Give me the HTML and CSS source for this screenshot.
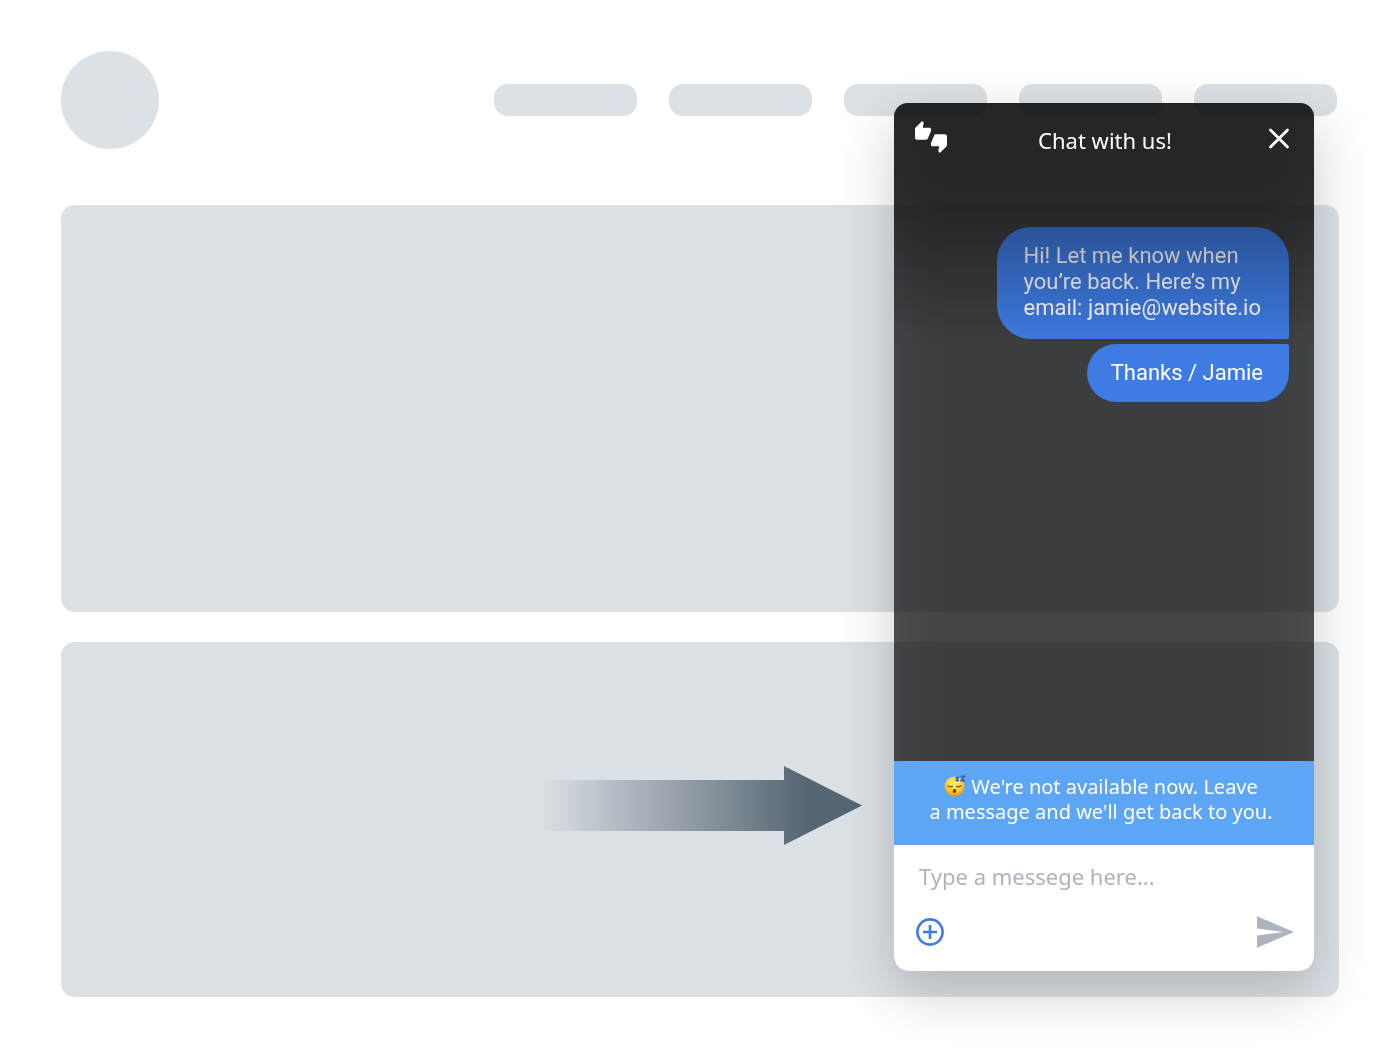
FILE: index.html
```html
<!DOCTYPE html>
<html lang="en">
<head>
  <meta charset="UTF-8" />
  <meta name="viewport" content="width=device-width, initial-scale=1.0"/>
  <title>Chat with us!</title>
  <link rel="stylesheet" href="styles.css">
</head>
<body>
  <!-- Placeholder page behind the widget -->
  <div class="page">
    <header class="page-header">
      <div class="logo"></div>
      <div class="nav">
        <div class="nav-item"></div>
        <div class="nav-item"></div>
        <div class="nav-item"></div>
        <div class="nav-item"></div>
        <div class="nav-item"></div>
      </div>
    </header>

    <div class="block block-large"></div>
    <div class="block block-arrow">
      <svg class="arrow" viewBox="0 0 324 79" aria-hidden="true">
        <defs>
          <linearGradient id="arrowFade" gradientUnits="userSpaceOnUse" x1="0" y1="0" x2="268" y2="0">
            <stop offset="0" stop-color="#566673" stop-opacity="0"/>
            <stop offset="1" stop-color="#566673"/>
          </linearGradient>
        </defs>
        <path fill="url(#arrowFade)" d="M0 14H246V0L324 39.500L246 79V65H0z"/>
      </svg>
    </div>
  </div>

  <!-- Chat widget -->
  <div class="chat">
    <div class="chat-window">
      <div class="chat-header">
        <button class="icon-btn" aria-label="Rate chat">
          <svg width="32" height="32" viewBox="0 0 24 24" fill="#fff">
            <path d="M12 6c0-.55-.45-1-1-1H5.820l.66-3.180.02-.23c0-.31-.13-.59-.33-.8L5.380 0 .44 4.940C.17 5.210 0 5.590 0 6v6.500c0 .83.67 1.500 1.500 1.500h6.750c.62 0 1.150-.38 1.380-.91l2.260-5.290c.07-.17.11-.36.11-.55V6zm10.500 4h-6.750c-.62 0-1.150.38-1.380.91l-2.260 5.290c-.07.17-.11.36-.11.55V18c0 .55.45 1 1 1h5.180l-.66 3.180-.02.24c0 .31.13.59.33.8l.79.78 4.940-4.940c.27-.27.44-.65.44-1.060v-6.500c0-.83-.67-1.500-1.500-1.500z"/>
          </svg>
        </button>
        <h1>Chat with us!</h1>
        <button class="icon-btn" aria-label="Close">
          <svg width="32" height="32" viewBox="0 0 32 32" stroke="#fff" stroke-width="2.800" stroke-linecap="round">
            <path d="M7.500 9L24.500 26M24.500 9L7.500 26"/>
          </svg>
        </button>
      </div>

      <div class="messages">
        <div class="bubble bubble-first">Hi! Let me know when<br>you’re back. Here’s my<br>email: jamie@website.io</div>
        <div class="bubble bubble-last">Thanks / Jamie</div>
      </div>

      <div class="notice">
        <svg class="emoji" width="22" height="22" viewBox="0 0 22 22" aria-hidden="true">
          <defs>
            <radialGradient id="face" cx=".5" cy=".35" r=".65">
              <stop offset="0" stop-color="#fff176"/>
              <stop offset=".6" stop-color="#fdd035"/>
              <stop offset="1" stop-color="#e8920c"/>
            </radialGradient>
          </defs>
          <circle cx="10.500" cy="11.500" r="10" fill="url(#face)"/>
          <g fill="none" stroke="#6b3f0c" stroke-width="1.200" stroke-linecap="round">
            <path d="M4 10.800Q6.200 12.600 8.400 11.200M12.600 11.200Q14.800 12.600 17 10.800"/>
          </g>
          <ellipse cx="10.500" cy="16" rx="1.800" ry="2" fill="#6b3f0c"/>
          <g fill="none" stroke="#2f5fc4" stroke-width="1.500" stroke-linejoin="round">
            <path d="M11.500 2.500H14.500L12 5.500H15"/>
            <path d="M16.500 1.200H20.500L17 5.800H21"/>
          </g>
        </svg>
        We're not available now. Leave<br>a message and we'll get back to you.
      </div>

      <form class="composer">
        <input type="text" aria-label="Message" placeholder="Type a messege here...">
        <div class="composer-actions">
          <button class="icon-btn" type="button" aria-label="Add attachment">
            <svg width="28" height="28" viewBox="0 0 28 28" fill="none" stroke="#3e7be3">
              <circle cx="14" cy="14" r="12.600" stroke-width="2.600"/>
              <path d="M14 7V21M7 14H21" stroke-width="2.600"/>
            </svg>
          </button>
          <button class="icon-btn" type="submit" aria-label="Send">
            <svg width="37" height="32" viewBox="2 3 21 18" fill="#adb4bd">
              <path d="M2.010 21L23 12 2.010 3 2 10l15 2-15 2z"/>
            </svg>
          </button>
        </div>
      </form>
    </div>
  </div>
</body>
</html>
```
FILE: styles.css
```css
* { box-sizing: border-box; }

body {
  margin: 0;
  background: #fff;
  font-family: "Noto Sans", sans-serif;
}

/* Placeholder page */
.page {
  display: flex;
  flex-direction: column;
  gap: 30px;
  padding: 51px 61px 53px;
}

.page-header {
  display: flex;
  align-items: center;
  justify-content: space-between;
  margin-bottom: 26px;
  padding-right: 2px;
}

.logo {
  width: 98px;
  height: 98px;
  border-radius: 50%;
  background: #dce1e5;
}

.nav {
  display: flex;
  gap: 32px;
}

.nav-item {
  width: 143px;
  height: 32px;
  border-radius: 14px;
  background: #dce1e5;
}

.block {
  border-radius: 14px;
  background: #dce1e5;
}

.block-large {
  height: 407px;
}

.block-arrow {
  display: flex;
  justify-content: flex-end;
  height: 355px;
  padding: 124px 477px 0 0;
}

.arrow {
  width: 324px;
  height: 79px;
}

/* Chat widget */
.chat {
  position: fixed;
  right: 86px;
  bottom: 79px;
  width: 420px;
  height: 868px;
  isolation: isolate;
}

/* soft shadow that also shows through the translucent window */
.chat::before {
  content: "";
  position: absolute;
  inset: 20px 0 -20px;
  z-index: -1;
  border-radius: 14px;
  background: rgba(0, 0, 0, 0.2);
  filter: blur(28px);
}

.chat-window {
  display: flex;
  flex-direction: column;
  height: 100%;
  overflow: hidden;
  border-radius: 14px;
  background: rgba(10, 10, 10, 0.7);
}

/* dark fade over the header and the oldest messages */
.chat-window::before {
  content: "";
  position: absolute;
  inset: 0 0 auto;
  height: 245px;
  border-radius: 14px 14px 0 0;
  background: linear-gradient(rgba(0, 0, 0, 0.52), rgba(0, 0, 0, 0.42) 38%, rgba(0, 0, 0, 0));
}

.chat-header {
  position: relative;
  display: flex;
  align-items: center;
  justify-content: space-between;
  padding: 18px 19px 0 21px;
}

.chat-header h1 {
  margin: 6px 0 0;
  color: #fff;
  font-size: 22px;
  line-height: 26px;
  font-weight: 400;
}

.icon-btn {
  display: flex;
  padding: 0;
  border: none;
  background: none;
  cursor: pointer;
}

.messages {
  display: flex;
  flex: 1;
  flex-direction: column;
  align-items: flex-end;
  gap: 5px;
  padding: 74px 25px 0;
}

.bubble {
  padding: 16px 26px 16px 24px;
  background: #3e7be3;
  color: #fff;
  font-family: Roboto, sans-serif;
  font-size: 22px;
  line-height: 26px;
}

.bubble-first {
  padding: 16px 28px 18px 26px;
  border-radius: 34px 34px 2px 34px;
}

.bubble-last {
  border-radius: 30px 2px 30px 30px;
}

.notice {
  padding: 13px 26px 21px 20px;
  background: #5ca6f5;
  color: #fff;
  font-size: 20px;
  line-height: 25px;
  text-align: center;
}

.emoji {
  vertical-align: -3px;
}

.composer {
  height: 126px;
  padding: 15px 20px 0 22px;
  background: #fff;
}

.composer input {
  display: block;
  width: 100%;
  height: 32px;
  padding: 0 3px;
  border: none;
  outline: none;
  background: none;
  color: #333;
  font-family: inherit;
  font-size: 22px;
}

.composer input::placeholder {
  color: #adb4bb;
}

.composer-actions {
  display: flex;
  align-items: center;
  justify-content: space-between;
  margin-top: 24px;
}
```
